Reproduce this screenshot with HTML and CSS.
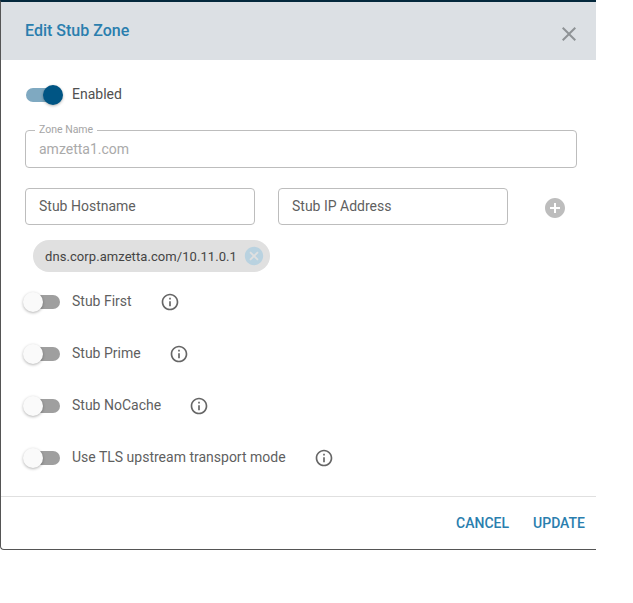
FILE: index.html
```html
<!DOCTYPE html>
<html lang="en">
<head>
    <meta charset="UTF-8">
    <meta name="viewport" content="width=device-width, initial-scale=1.0">
    <title>Edit Stub Zone</title>
    <link rel="stylesheet" href="styles.css">
</head>
<body>

    <div class="dialog">
        <div class="dialog-header">
            <h2>Edit Stub Zone</h2>
            <svg class="close-icon" width="24" height="24" viewBox="0 0 24 24"><path d="M19 6.41 17.59 5 12 10.59 6.41 5 5 6.41 10.59 12 5 17.59 6.41 19 12 13.41 17.59 19 19 17.59 13.41 12z"/></svg>
        </div>

        <div class="dialog-body">
            <div class="switch-row enabled-row">
                <span class="switch on"><span class="thumb"></span></span>
                <span class="switch-label">Enabled</span>
            </div>

            <fieldset class="zone-field">
                <legend>Zone Name</legend>
                <span>amzetta1.com</span>
            </fieldset>

            <div class="stub-row">
                <div class="text-field">Stub Hostname</div>
                <div class="text-field">Stub IP Address</div>
                <svg class="add-icon" width="24" height="24" viewBox="0 0 24 24"><path d="M12 2C6.48 2 2 6.48 2 12s4.48 10 10 10 10-4.48 10-10S17.52 2 12 2zm5 11h-4v4h-2v-4H7v-2h4V7h2v4h4v2z"/></svg>
            </div>

            <div class="chip">
                <span>dns.corp.amzetta.com/10.11.0.1</span>
                <svg width="22" height="22" viewBox="0 0 24 24"><path d="M12 2C6.47 2 2 6.47 2 12s4.47 10 10 10 10-4.47 10-10S17.53 2 12 2zm5 13.59L15.59 17 12 13.41 8.41 17 7 15.59 10.59 12 7 8.41 8.41 7 12 10.59 15.59 7 17 8.41 13.41 12 17 15.59z"/></svg>
            </div>

            <div class="switch-row">
                <span class="switch"><span class="thumb"></span></span>
                <span class="switch-label">Stub First</span>
                <svg class="info-icon" width="20" height="20" viewBox="0 0 24 24"><path d="M11 7h2v2h-2zm0 4h2v6h-2zm1-9C6.48 2 2 6.48 2 12s4.48 10 10 10 10-4.48 10-10S17.52 2 12 2zm0 18c-4.41 0-8-3.59-8-8s3.59-8 8-8 8 3.59 8 8-3.59 8-8 8z"/></svg>
            </div>
            <div class="switch-row">
                <span class="switch"><span class="thumb"></span></span>
                <span class="switch-label">Stub Prime</span>
                <svg class="info-icon" width="20" height="20" viewBox="0 0 24 24"><path d="M11 7h2v2h-2zm0 4h2v6h-2zm1-9C6.48 2 2 6.48 2 12s4.48 10 10 10 10-4.48 10-10S17.52 2 12 2zm0 18c-4.41 0-8-3.59-8-8s3.59-8 8-8 8 3.59 8 8-3.59 8-8 8z"/></svg>
            </div>
            <div class="switch-row">
                <span class="switch"><span class="thumb"></span></span>
                <span class="switch-label">Stub NoCache</span>
                <svg class="info-icon" width="20" height="20" viewBox="0 0 24 24"><path d="M11 7h2v2h-2zm0 4h2v6h-2zm1-9C6.48 2 2 6.48 2 12s4.48 10 10 10 10-4.48 10-10S17.52 2 12 2zm0 18c-4.41 0-8-3.59-8-8s3.59-8 8-8 8 3.59 8 8-3.59 8-8 8z"/></svg>
            </div>
            <div class="switch-row">
                <span class="switch"><span class="thumb"></span></span>
                <span class="switch-label">Use TLS upstream transport mode</span>
                <svg class="info-icon" width="20" height="20" viewBox="0 0 24 24"><path d="M11 7h2v2h-2zm0 4h2v6h-2zm1-9C6.48 2 2 6.48 2 12s4.48 10 10 10 10-4.48 10-10S17.52 2 12 2zm0 18c-4.41 0-8-3.59-8-8s3.59-8 8-8 8 3.59 8 8-3.59 8-8 8z"/></svg>
            </div>
        </div>

        <div class="dialog-footer">
            <button>CANCEL</button>
            <button>UPDATE</button>
        </div>
    </div>

</body>
</html>
```

FILE: styles.css
```css
body {
    margin: 0;
    font-family: Roboto, "Liberation Sans", sans-serif;
    background-color: white;
}
.dialog {
    width: 595px;
    height: 547px;
    border-top: 2px solid #04283c;
    border-left: 1px solid #555;
    border-bottom: 1px solid #555;
    border-bottom-left-radius: 4px;
    display: flex;
    flex-direction: column;
}
.dialog-header {
    height: 58px;
    flex-shrink: 0;
    background-color: #dce0e4;
    display: flex;
    align-items: center;
    justify-content: space-between;
    padding: 0 15px 0 24px;
}
.dialog-header h2 {
    margin: 0 0 2px;
    font-size: 16px;
    font-weight: 500;
    color: #2a7eae;
}
.close-icon {
    fill: #8f9396;
    margin-top: 5px;
}
.dialog-body {
    flex: 1;
    padding: 0 19px 0 24px;
}
.switch-row {
    height: 52px;
    display: flex;
    align-items: center;
    font-size: 14px;
    color: #5f5f5f;
}
.enabled-row {
    height: 24px;
    margin-top: 23px;
    color: #505050;
}
.switch {
    position: relative;
    width: 34px;
    height: 14px;
    margin-left: 1px;
    margin-right: 12px;
    border-radius: 7px;
    background-color: #9f9f9f;
}
.switch .thumb {
    position: absolute;
    left: -3px;
    top: -3px;
    width: 20px;
    height: 20px;
    border-radius: 50%;
    background-color: #fafafa;
    box-shadow: 0 1px 3px rgba(0, 0, 0, 0.3);
}
.switch.on {
    background-color: #7fa9c1;
}
.switch.on .thumb {
    left: 17px;
    background-color: #005584;
}
.switch-label {
    margin-top: -2px;
}
.info-icon {
    fill: #666;
    margin-left: 28px;
}
.zone-field {
    margin: 0;
    margin-top: 17px;
    padding: 0 13px;
    height: 44px;
    box-sizing: border-box;
    width: 552px;
    border: 1px solid #bdbdbd;
    border-radius: 4px;
    font-size: 14px;
    color: #aaa;
}
.zone-field legend {
    font-size: 10.5px;
    padding: 0 4px;
    margin-left: -4px;
    color: #a5a5a5;
    line-height: 12px;
}
.zone-field span {
    display: block;
    line-height: 20px;
    margin-top: 3px;
}
.stub-row {
    display: flex;
    align-items: center;
    margin-top: 20px;
}
.text-field {
    width: 230px;
    height: 37px;
    box-sizing: border-box;
    border: 1px solid #bdbdbd;
    border-radius: 4px;
    padding: 0 13px;
    font-size: 14px;
    line-height: 34px;
    color: #5f5f5f;
    margin-right: 23px;
}
.add-icon {
    fill: #bdbdbd;
    margin-left: 12px;
    margin-top: 2px;
}
.chip {
    display: inline-flex;
    align-items: center;
    height: 32px;
    margin: 15px 0 4px 8px;
    padding: 0 5px 0 12px;
    border-radius: 16px;
    background-color: #e0e0e0;
    font-size: 13px;
    letter-spacing: 0.07px;
    color: #444;
}
.chip svg {
    fill: #b9d2e0;
    margin-left: 6px;
}
.dialog-footer {
    height: 52px;
    flex-shrink: 0;
    border-top: 1px solid #e0e0e0;
    display: flex;
    justify-content: flex-end;
    align-items: center;
    gap: 24px;
    padding-right: 11px;
}
.dialog-footer button {
    padding: 0;
    border: none;
    background: none;
    font-family: inherit;
    font-size: 14px;
    font-weight: 500;
    color: #2a7eae;
    cursor: pointer;
}
```
